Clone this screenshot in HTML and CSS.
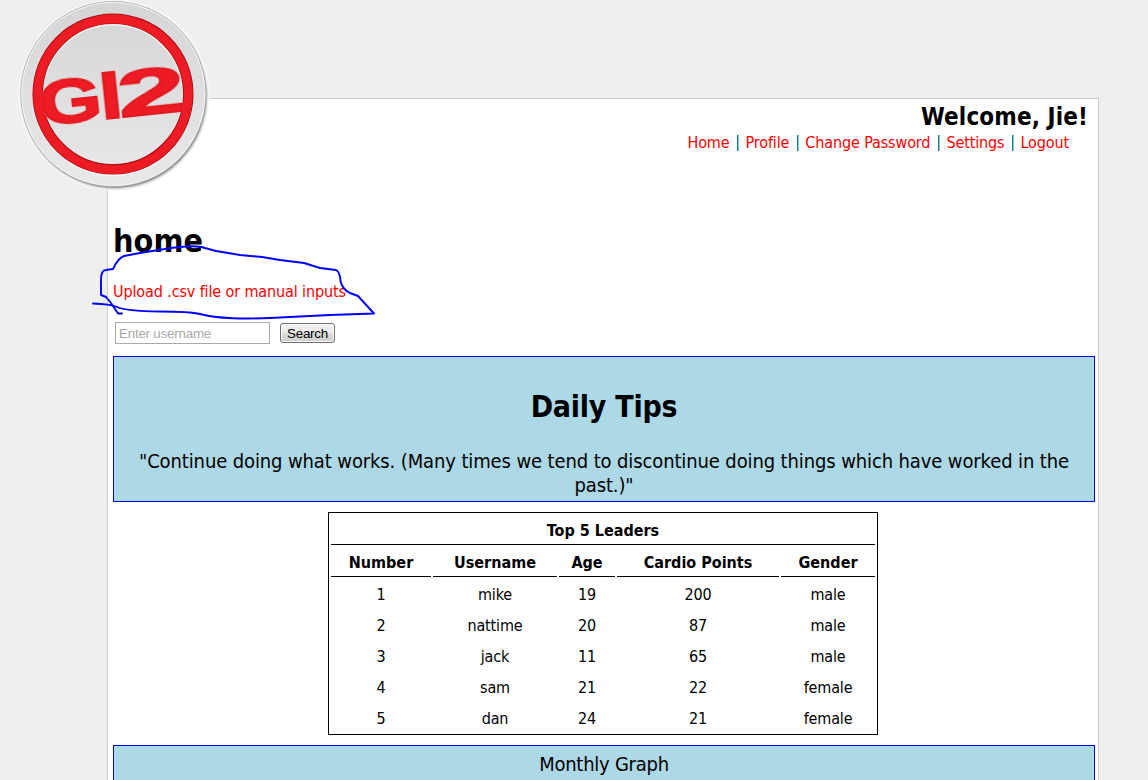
FILE: index.html
```
<!DOCTYPE html>
<html lang="en">
<head>
<meta charset="utf-8">
<title>Home</title>
<link rel="stylesheet" href="styles.css">
</head>
<body>
<svg class="logo" viewBox="0 0 214 194" role="img" aria-label="G12">
  <defs>
    <linearGradient id="plate" x1="0" y1="0" x2="0" y2="1"><stop offset="0" stop-color="#d5d5d5"/><stop offset="1" stop-color="#e9e9e9"/></linearGradient>
    <filter id="soft" x="-10%" y="-10%" width="120%" height="120%"><feGaussianBlur stdDeviation="1.3"/></filter>
  </defs>
  <circle cx="114" cy="95" r="95.5" fill="#fff"/>
  <circle cx="114" cy="95" r="95.5" fill="#efefef" fill-opacity=".5"/>
  <circle cx="114.500" cy="96" r="92" fill="#777" filter="url(#soft)"/>
  <circle cx="113.300" cy="94" r="92.600" fill="url(#plate)" stroke="#aaa" stroke-width=".8"/>
  <circle cx="113.300" cy="94" r="91.500" fill="none" stroke="#f3f3f3"/>
  <circle cx="113" cy="94.800" r="75.300" fill="none" stroke="#f7f7f7" stroke-width="12"/>
  <circle cx="113" cy="94" r="75.300" fill="none" stroke="#a90d15" stroke-width="10.600"/>
  <g class="mark" transform="rotate(-6 113 95)">
    <text transform="translate(38.5 118) scale(2.02 1.56)">G</text>
    <text transform="translate(99.500 118.3) scale(2 1.680)">I</text>
    <text transform="translate(117.500 118.3) scale(3.050 1.630)">2</text>
  </g>
  <circle cx="113" cy="94.300" r="75.300" fill="none" stroke="#ed1c24" stroke-width="8.800"/>
</svg>

<main class="panel">
  <header class="account">
    <div class="welcome">Welcome, Jie!</div>
    <nav class="links"><a>Home</a><i></i><a>Profile</a><i></i><a>Change Password</a><i></i><a>Settings</a><i></i><a>Logout</a></nav>
  </header>
  <h1 class="title">home</h1>
  <a class="upload">Upload .csv file or manual inputs</a>
  <form class="search">
    <input class="field" type="text" placeholder="Enter username">
    <button class="button" type="button">Search</button>
  </form>
  <section class="tips">
    <h2 class="tips-title">Daily Tips</h2>
    <p class="quote"><span class="first">"Continue doing what works. (Many times we tend to discontinue doing things which have worked in the</span> past.)"</p>
  </section>
  <table class="leaders">
    <colgroup><col class="c-number"><col class="c-user"><col class="c-age"><col class="c-points"><col class="c-gender"></colgroup>
    <thead>
      <tr><th colspan="5">Top 5 Leaders</th></tr>
      <tr><th>Number</th><th>Username</th><th>Age</th><th>Cardio Points</th><th>Gender</th></tr>
    </thead>
    <tbody>
      <tr><td>1</td><td>mike</td><td>19</td><td>200</td><td>male</td></tr>
      <tr><td>2</td><td>nattime</td><td>20</td><td>87</td><td>male</td></tr>
      <tr><td>3</td><td>jack</td><td>11</td><td>65</td><td>male</td></tr>
      <tr><td>4</td><td>sam</td><td>21</td><td>22</td><td>female</td></tr>
      <tr><td>5</td><td>dan</td><td>24</td><td>21</td><td>female</td></tr>
    </tbody>
  </table>
  <section class="graph">Monthly Graph</section>
</main>

<svg class="scribble" viewBox="90 240 290 85" aria-hidden="true">
  <path d="M122 313.5H118L111 303L106 297L101 295V280Q101 270 106 270L113 269Q118 258 124 256L140 253L165 249Q195 244 205 248L216 251L240 255L262 257L280 260L304 263L320 268L336 270Q340 272 340.500 281Q342 289 350 293L358 296L374 313.500L330 315L270 318Q222 320 200 314Q190 311.500 160 311.500Q125 311 117 307Q110 304 93 303.500"/>
</svg>
</body>
</html>
```
FILE: styles.css
```
* { box-sizing: border-box; }
html { height: 100%; overflow: hidden; }
body {
  margin: 0;
  height: 780px;
  overflow: hidden;
  background: #efefef;
  color: #000;
  font: 16px/20px "DejaVu Sans Condensed", "DejaVu Sans", sans-serif;
  font-stretch: condensed;
}
.panel {
  margin: 98px 0 0 107px;
  width: 992px;
  height: 720px;
  padding: 0 3px 0 5px;
  border: 1px solid #ccc;
  background: #fff;
}
.logo { position: absolute; left: 0; top: 0; width: 214px; height: 194px; }
.mark { fill: #ed1c24; filter: drop-shadow(0 .8px 0 #fff); }
.mark text {
  font: bold 40px "Liberation Sans", sans-serif;
  stroke: #e01a22;
  stroke-width: 1.2px;
}
.account { height: 121px; padding-top: 4px; }
.welcome { padding-right: 7px; text-align: right; font-size: 24px; line-height: 29px; font-weight: bold; letter-spacing: .12px; }
.links { display: flex; justify-content: flex-end; align-items: center; padding-right: 26px; height: 22px; letter-spacing: -.12px; }
.links a, .upload { color: red; white-space: nowrap; }
.links i { width: 2px; height: 16px; margin: 0 6px 0 8px; background: linear-gradient(90deg, #16809b 50%, #8fc0cb 50%); }
.title { margin: 1px 0 0; font-size: 32px; line-height: 40px; letter-spacing: .1px; }
.upload { display: block; margin-top: 21px; height: 20px; letter-spacing: -.12px; }
.search { display: flex; align-items: center; gap: 10px; height: 22px; margin: 20px 0 12px 2px; }
.field {
  width: 155px;
  height: 22px;
  padding: 1px 3px;
  border: 1px solid #aaa;
  background: #fff;
  font: 13.33px "Liberation Sans", sans-serif;
  letter-spacing: -.2px;
}
.field::placeholder { color: #a9a9a9; opacity: 1; }
.button {
  width: 55px;
  height: 20px;
  padding: 0;
  border: 1px solid #707070;
  border-radius: 3px;
  background: linear-gradient(#f2f2f2 0%, #ebebeb 50%, #dddddd 50%, #cfcfcf 100%);
  box-shadow: inset 0 0 0 1px #fafafa;
  font: 13.33px "Liberation Sans", sans-serif;
  letter-spacing: -.2px;
}
.tips, .graph { border: 1px solid #00f; background: #add8e6; text-align: center; font-size: 20px; line-height: 24px; letter-spacing: -.12px; }
.tips { height: 146px; padding-top: 31px; }
.tips-title { margin: 0; font-size: 30px; line-height: 37px; letter-spacing: -.25px; }
.quote { margin: 24px 0 0; }
.first { display: block; white-space: nowrap; }
.leaders {
  width: 550px;
  height: 223px;
  margin: 10px 0 10px 215px;
  border: 1px solid #000;
  border-spacing: 2px;
  table-layout: fixed;
  text-align: center;
}
.leaders th, .leaders td { height: 29px; padding: 2px 0 0; }
.leaders td { letter-spacing: -.15px; }
.leaders th { height: 30px; border-bottom: 1px solid #000; }
.c-number { width: 100px; }
.c-user { width: 124px; }
.c-age { width: 56px; }
.c-points { width: 162px; }
.c-gender { width: 94px; }
.graph { height: 60px; padding-top: 6px; letter-spacing: -.25px; }
.scribble { position: absolute; left: 90px; top: 240px; width: 290px; height: 85px; }
.scribble path { fill: none; stroke: #00f; stroke-width: 1.9; stroke-linecap: round; stroke-linejoin: round; }
```
